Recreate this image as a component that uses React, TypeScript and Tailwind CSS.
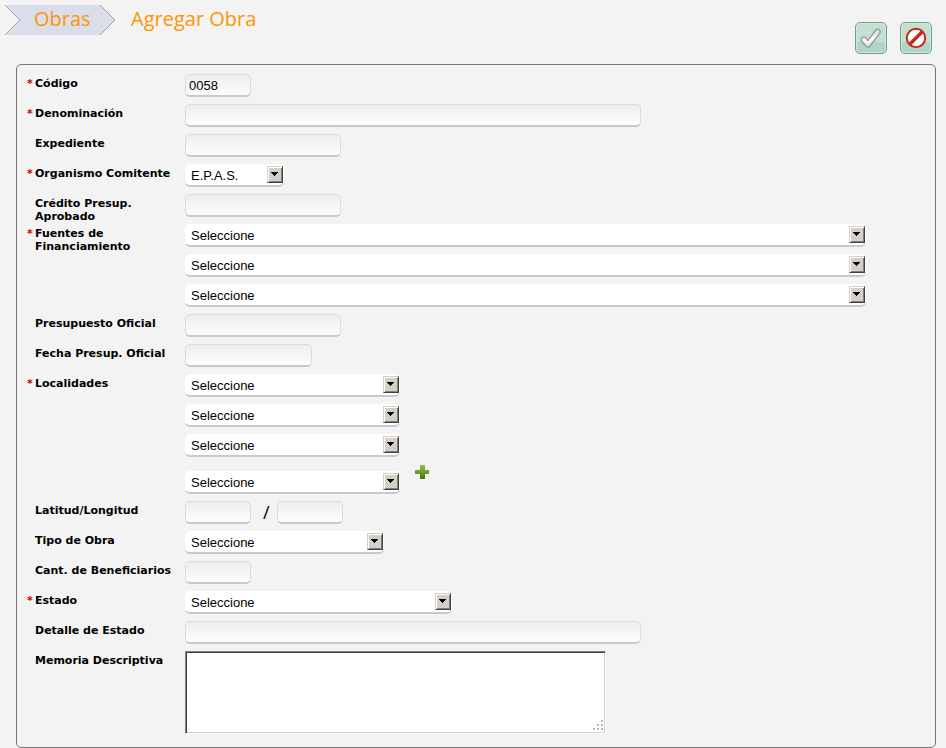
import type { ReactNode } from "react";

function Row({ label, htmlFor, required, children }: { label: string; htmlFor: string; required?: boolean; children: ReactNode }) {
  return (
    <div className="flex min-h-[30px] items-start">
      <div className="flex w-[158px] shrink-0 pt-[3px] font-['DejaVu_Sans',Verdana,sans-serif] text-[11px] leading-[13px] font-bold">
        <span className="w-2 shrink-0 text-[#c00]">{required ? "*" : ""}</span>
        <label htmlFor={htmlFor}>{label}</label>
      </div>
      <div className="min-w-0 grow">{children}</div>
    </div>
  );
}

function TextField({ id, width, value, label }: { id: string; width: string; value?: string; label?: string }) {
  return (
    <input
      id={id}
      type="text"
      aria-label={label}
      defaultValue={value}
      className={`block h-[23px] max-w-full rounded-[5px] border border-b-2 border-[#dcdcdc] border-b-[#c9c9c9] bg-linear-to-b from-[#ededed] to-[#fdfdfd] px-[3px] text-[13px] outline-none ${width}`}
    />
  );
}

function SelectField({ id, width, value = "Seleccione", label }: { id: string; width: string; value?: string; label?: string }) {
  return (
    <div className={`relative h-[23px] max-w-full ${width}`}>
      <select
        id={id}
        aria-label={label}
        className="block h-[23px] w-full appearance-none rounded-[5px] border-b-2 border-[#c9c9c9] bg-white pt-[2px] pr-5 pl-[6px] text-[13px] outline-none"
      >
        <option>{value}</option>
      </select>
      <span className="pointer-events-none absolute top-[2px] right-px flex h-[17px] w-4 items-start border border-[#d4d0c8] border-r-[#404040] border-b-[#404040] bg-[#d4d0c8] pt-[5px] pl-[3px] shadow-[inset_1px_1px_0_#fff,inset_-1px_-1px_0_#808080]">
        <svg width="7" height="4" viewBox="0 0 7 4" shapeRendering="crispEdges" aria-hidden="true">
          <path d="M0 0h7v1H6v1H5v1H4v1H3V3H2V2H1V1H0z" fill="#000" />
        </svg>
      </span>
    </div>
  );
}

function ActionButton({ label, children }: { label: string; children: ReactNode }) {
  return (
    <button
      type="button"
      aria-label={label}
      className="flex size-8 items-center justify-center rounded-[5px] border border-[#68a486] bg-linear-to-b from-[#c5dfd2] from-65% to-[#b3d4c4] to-65% shadow-[inset_0_0_0_1px_#d3e8dd]"
    >
      {children}
    </button>
  );
}

export default function App() {
  return (
    <div className="bg-[#f3f3f3] font-['Liberation_Sans',Arial,sans-serif] text-black">
      <header className="flex h-16 items-start justify-between pt-[5px] pr-[14px] pl-[5px] font-['Open_Sans',sans-serif] text-[20px] text-[#ff9500]">
        <nav className="flex h-[30px] items-start gap-4">
          <a href="#obras" className="relative block h-[30px] w-[110px] pl-[29px]">
            <svg className="absolute inset-0" width="110" height="30" viewBox="0 0 110 30" aria-hidden="true">
              <path d="M0 0H95L110 15L95 30H0L15 15z" fill="#dadeeb" />
              <path d="M0 0L15 15L0 30M95 0L110 15L95 30" fill="none" stroke="#a4a5ab" strokeWidth="1" />
            </svg>
            <span className="relative block leading-7">Obras</span>
          </a>
          <h1 className="leading-7">Agregar Obra</h1>
        </nav>
        <div className="flex gap-[13px] pt-[17px]">
          <ActionButton label="Aceptar">
            <svg width="24" height="24" viewBox="0 0 24 24" fill="none" strokeLinecap="round" strokeLinejoin="round" aria-hidden="true">
              <defs>
                <linearGradient id="tick" x1="0" y1="0" x2="0" y2="1">
                  <stop offset="0" stopColor="#e2e2e2" />
                  <stop offset=".6" stopColor="#ffffff" />
                  <stop offset="1" stopColor="#e8e8e8" />
                </linearGradient>
              </defs>
              <path d="M4.8 13.8L9 18.4L18.6 5.8" stroke="#7d8a84" strokeOpacity=".35" strokeWidth="7" />
              <path d="M4.8 13.8L9 18.4L18.6 5.8" stroke="#858a88" strokeWidth="5.4" />
              <path d="M4.8 13.8L9 18.4L18.6 5.8" stroke="url(#tick)" strokeWidth="3.8" />
            </svg>
          </ActionButton>
          <ActionButton label="Cancelar">
            <svg width="22" height="22" viewBox="0 0 22 22" aria-hidden="true">
              <circle cx="11" cy="11" r="9.2" fill="#fff" stroke="#c42a17" strokeWidth="2" />
              <path d="M4.8 17.2L17.2 4.8" stroke="#c42a17" strokeWidth="3.4" />
            </svg>
          </ActionButton>
        </div>
      </header>

      <form className="mr-[10px] ml-4 rounded-[5px] border border-[#777770] pt-[9px] pr-4 pb-[13px] pl-[10px]">
        <Row label="Código" htmlFor="codigo" required>
          <TextField id="codigo" width="w-[66px]" value="0058" />
        </Row>
        <Row label="Denominación" htmlFor="denominacion" required>
          <TextField id="denominacion" width="w-[456px]" />
        </Row>
        <Row label="Expediente" htmlFor="expediente">
          <TextField id="expediente" width="w-[156px]" />
        </Row>
        <Row label="Organismo Comitente" htmlFor="organismo" required>
          <SelectField id="organismo" width="w-[99px]" value="E.P.A.S." />
        </Row>
        <Row label="Crédito Presup. Aprobado" htmlFor="credito">
          <TextField id="credito" width="w-[156px]" />
        </Row>
        <Row label="Fuentes de Financiamiento" htmlFor="fuente1" required>
          <div className="flex flex-col gap-[7px] pb-[7px]">
            <SelectField id="fuente1" width="w-[681px]" />
            <SelectField id="fuente2" width="w-[681px]" label="Fuente de financiamiento 2" />
            <SelectField id="fuente3" width="w-[681px]" label="Fuente de financiamiento 3" />
          </div>
        </Row>
        <Row label="Presupuesto Oficial" htmlFor="presupuesto">
          <TextField id="presupuesto" width="w-[156px]" />
        </Row>
        <Row label="Fecha Presup. Oficial" htmlFor="fecha">
          <TextField id="fecha" width="w-[127px]" />
        </Row>
        <Row label="Localidades" htmlFor="localidad1" required>
          <div className="flex flex-col gap-[7px] pb-[7px]">
            <SelectField id="localidad1" width="w-[215px]" />
            <SelectField id="localidad2" width="w-[215px]" label="Localidad 2" />
            <SelectField id="localidad3" width="w-[215px]" label="Localidad 3" />
            <div className="flex h-[30px] items-start gap-[15px]">
              <div className="self-end">
                <SelectField id="localidad4" width="w-[215px]" label="Localidad 4" />
              </div>
              <button type="button" aria-label="Agregar localidad" className="mt-px">
                <svg className="block" width="14" height="14" viewBox="0 0 14 14" aria-hidden="true">
                  <defs>
                    <linearGradient id="plus" x1="0" y1="0" x2="0" y2="1">
                      <stop offset="0" stopColor="#8fbd4e" />
                      <stop offset=".5" stopColor="#6d9f2b" />
                      <stop offset="1" stopColor="#4a6f0f" />
                    </linearGradient>
                  </defs>
                  <path d="M5 0h5v5h4v4h-4v5H5V9H0V5h5z" fill="url(#plus)" />
                </svg>
              </button>
            </div>
          </div>
        </Row>
        <Row label="Latitud/Longitud" htmlFor="latitud">
          <div className="flex">
            <TextField id="latitud" width="w-[66px]" />
            <span className="w-[26px] pl-3 font-['Open_Sans',sans-serif] text-[18px] leading-[22px]">/</span>
            <TextField id="longitud" width="w-[66px]" label="Longitud" />
          </div>
        </Row>
        <Row label="Tipo de Obra" htmlFor="tipo">
          <SelectField id="tipo" width="w-[199px]" />
        </Row>
        <Row label="Cant. de Beneficiarios" htmlFor="beneficiarios">
          <TextField id="beneficiarios" width="w-[66px]" />
        </Row>
        <Row label="Estado" htmlFor="estado" required>
          <SelectField id="estado" width="w-[267px]" />
        </Row>
        <Row label="Detalle de Estado" htmlFor="detalle">
          <TextField id="detalle" width="w-[456px]" />
        </Row>
        <Row label="Memoria Descriptiva" htmlFor="memoria">
          <div className="relative h-[83px] w-[421px] max-w-full">
            <textarea
              id="memoria"
              className="block size-full resize-none border border-[#808080] border-r-white border-b-white bg-white p-1 text-[13px] shadow-[inset_1px_1px_0_#404040,inset_-1px_-1px_0_#d4d0c8] outline-none"
            />
            <svg className="pointer-events-none absolute right-[2px] bottom-[2px]" width="12" height="12" viewBox="0 0 12 12" fill="#b8b8b8" aria-hidden="true">
              <path d="M9 0h2v2H9zM5 4h2v2H5zM9 4h2v2H9zM1 8h2v2H1zM5 8h2v2H5zM9 8h2v2H9z" />
            </svg>
          </div>
        </Row>
      </form>
    </div>
  );
}
